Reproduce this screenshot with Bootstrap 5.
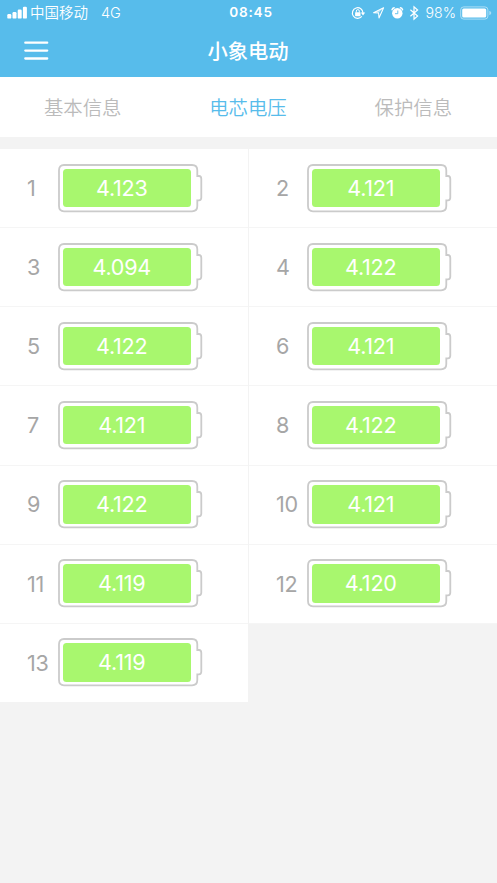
<!DOCTYPE html>
<html lang="zh-CN">
<head>
<meta charset="utf-8">
<meta name="viewport" content="width=device-width, initial-scale=1">
<title>小象电动</title>
<link href="https://cdn.jsdelivr.net/npm/bootstrap@5.3.0/dist/css/bootstrap.min.css" rel="stylesheet">
<style>
body{background:#f3f3f3;font-family:Inter,"Noto Sans CJK SC",sans-serif;min-height:883px;overflow:hidden}
.top-area{background:#57bceb;height:77px}
.status-row{height:25px;font-size:14.5px;line-height:25px;padding-left:7px;padding-right:5px}
.status-side{flex:1 1 0}
.carrier{font-weight:350;margin-left:3px}
.net-type{font-weight:350;margin-left:13px}
.clock{font-size:13.6px;font-weight:600;letter-spacing:.75px;padding-left:3px}
.percent{font-weight:350;font-size:14.2px;margin-left:5px;margin-right:4px}
.title-row{height:52px;padding:0 26px 0 24px}
.title-row h1{font-size:20.3px;line-height:52px;font-weight:500;padding-top:1px}
.tab-row{height:60px;margin-bottom:12px;font-size:19.4px;font-weight:350;line-height:62px;color:#bbb;padding-right:1px}
.tab-row .on{color:#57bceb}
.cells{display:grid;grid-template-columns:248px 248px;column-gap:1px;grid-auto-rows:79.15px}
.cell{border-bottom:1.5px solid #f5f5f5;padding-left:27px}
.cell:last-child{border-bottom:0;height:78px}
.cell-no{width:31px;font-size:21.6px;font-weight:400;color:#a6a6a6;letter-spacing:-.4px}
.batt,.batt svg{width:145px;height:49px}
.batt svg{display:block}
.level{left:5px;top:5px;width:127.500px;height:38.500px;line-height:39px;border-radius:3.5px;background:#a8f76e;font-size:21.6px;font-weight:400;padding-right:10px;letter-spacing:-.25px}
</style>
</head>
<body>
<svg width="0" height="0" class="position-absolute"><defs>
<symbol id="shell" viewBox="0 0 145 49"><path d="M6 1H134Q139.300 1 139.300 6.300V12H141Q143.300 12 143.300 15V33.500Q143.300 36.300 141 36.300H139.300V42Q139.300 47.300 134 47.300H6Q1 47.300 1 42V6.300Q1 1 6 1Z" fill="#fff" stroke="#cbcbcb" stroke-width="1.800"/></symbol>
</defs></svg>
<header class="top-area text-white">
  <div class="status-row d-flex align-items-center">
    <div class="status-side d-flex align-items-center">
      <svg width="20" height="13" viewBox="0 0 20 13" fill="#fff"><rect x=".3" y="8" width="4" height="4.600" rx="1.200"/><rect x="5.500" y="6" width="4" height="6.600" rx="1.200"/><rect x="10.700" y="3.500" width="4" height="9.100" rx="1.200"/><rect x="15.900" y=".8" width="4" height="11.800" rx="1.200"/></svg>
      <span class="carrier">中国移动</span><span class="net-type">4G</span>
    </div>
    <span class="clock">08:45</span>
    <div class="status-side d-flex align-items-center justify-content-end">
      <svg width="70" height="16" viewBox="0 0 70 16" fill="none" stroke="#fff">
        <path d="M10.800 11.400A5.300 5.300 0 1 1 12 8" stroke-width="1.200"/><path d="M9.800 7.400H14.200L12 10.400Z" fill="#fff" stroke="none"/><rect x="4.100" y="7.200" width="5.400" height="4" rx=".4" fill="#fff" stroke="none"/><path d="M5.300 7.500V6.100a1.500 1.500 0 0 1 3 0V7.500" stroke-width="1"/>
        <path d="M32.600 2.800L22.600 7.800L27.600 8L28 13Z" stroke-width="1.050" stroke-linejoin="round"/><path d="M32.600 2.800L22.600 7.800L27.600 8Z" fill="#fff" fill-opacity=".5" stroke="none"/>
        <circle cx="46.300" cy="8.300" r="5.200" fill="#fff" stroke="none"/><path d="M41 4.800Q41.500 3.200 43.200 2.800M49.400 2.800Q51.100 3.200 51.600 4.800" stroke-width="1.400" stroke-linecap="round"/><path d="M46.800 5.500V8.700H44" stroke="#57bceb" stroke-width=".9"/>
        <path d="M59.400 4.800L66.600 11L63 14.200V1.800L66.600 5L59.400 11.200" stroke-width="1.200"/>
      </svg>
      <span class="percent">98%</span>
      <svg width="32" height="14" viewBox="0 0 32 14"><rect x=".7" y=".9" width="27.200" height="12.200" rx="3" fill="none" stroke="#fff" stroke-opacity=".5"/><rect x="2.200" y="2.400" width="24" height="9.200" rx="1.500" fill="#fff"/><path d="M29.300 4.800Q31.300 5.500 31.300 7T29.300 9.200Z" fill="#fff" fill-opacity=".5"/></svg>
    </div>
  </div>
  <div class="title-row d-flex align-items-center">
    <svg width="25" height="20" viewBox="0 0 25 20" stroke="#fff" stroke-width="2.300" stroke-linecap="round"><path d="M1.300 1.700H23.200M1.300 9.600H23.200M1.300 17.500H23.200"/></svg>
    <h1 class="flex-fill text-center mb-0 pe-4">小象电动</h1>
  </div>
</header>
<nav class="tab-row bg-white d-flex text-center">
  <span class="col-4">基本信息</span><span class="col-4 on">电芯电压</span><span class="col-4">保护信息</span>
</nav>
<main class="cells">
  <div class="cell bg-white d-flex align-items-center"><span class="cell-no">1</span><div class="batt position-relative"><svg><use href="#shell"/></svg><div class="level position-absolute text-white text-center">4.123</div></div></div>
  <div class="cell bg-white d-flex align-items-center"><span class="cell-no">2</span><div class="batt position-relative"><svg><use href="#shell"/></svg><div class="level position-absolute text-white text-center">4.121</div></div></div>
  <div class="cell bg-white d-flex align-items-center"><span class="cell-no">3</span><div class="batt position-relative"><svg><use href="#shell"/></svg><div class="level position-absolute text-white text-center">4.094</div></div></div>
  <div class="cell bg-white d-flex align-items-center"><span class="cell-no">4</span><div class="batt position-relative"><svg><use href="#shell"/></svg><div class="level position-absolute text-white text-center">4.122</div></div></div>
  <div class="cell bg-white d-flex align-items-center"><span class="cell-no">5</span><div class="batt position-relative"><svg><use href="#shell"/></svg><div class="level position-absolute text-white text-center">4.122</div></div></div>
  <div class="cell bg-white d-flex align-items-center"><span class="cell-no">6</span><div class="batt position-relative"><svg><use href="#shell"/></svg><div class="level position-absolute text-white text-center">4.121</div></div></div>
  <div class="cell bg-white d-flex align-items-center"><span class="cell-no">7</span><div class="batt position-relative"><svg><use href="#shell"/></svg><div class="level position-absolute text-white text-center">4.121</div></div></div>
  <div class="cell bg-white d-flex align-items-center"><span class="cell-no">8</span><div class="batt position-relative"><svg><use href="#shell"/></svg><div class="level position-absolute text-white text-center">4.122</div></div></div>
  <div class="cell bg-white d-flex align-items-center"><span class="cell-no">9</span><div class="batt position-relative"><svg><use href="#shell"/></svg><div class="level position-absolute text-white text-center">4.122</div></div></div>
  <div class="cell bg-white d-flex align-items-center"><span class="cell-no">10</span><div class="batt position-relative"><svg><use href="#shell"/></svg><div class="level position-absolute text-white text-center">4.121</div></div></div>
  <div class="cell bg-white d-flex align-items-center"><span class="cell-no">11</span><div class="batt position-relative"><svg><use href="#shell"/></svg><div class="level position-absolute text-white text-center">4.119</div></div></div>
  <div class="cell bg-white d-flex align-items-center"><span class="cell-no">12</span><div class="batt position-relative"><svg><use href="#shell"/></svg><div class="level position-absolute text-white text-center">4.120</div></div></div>
  <div class="cell bg-white d-flex align-items-center"><span class="cell-no">13</span><div class="batt position-relative"><svg><use href="#shell"/></svg><div class="level position-absolute text-white text-center">4.119</div></div></div>
</main>
<script src="https://cdn.jsdelivr.net/npm/bootstrap@5.3.0/dist/js/bootstrap.bundle.min.js"></script>
</body>
</html>
